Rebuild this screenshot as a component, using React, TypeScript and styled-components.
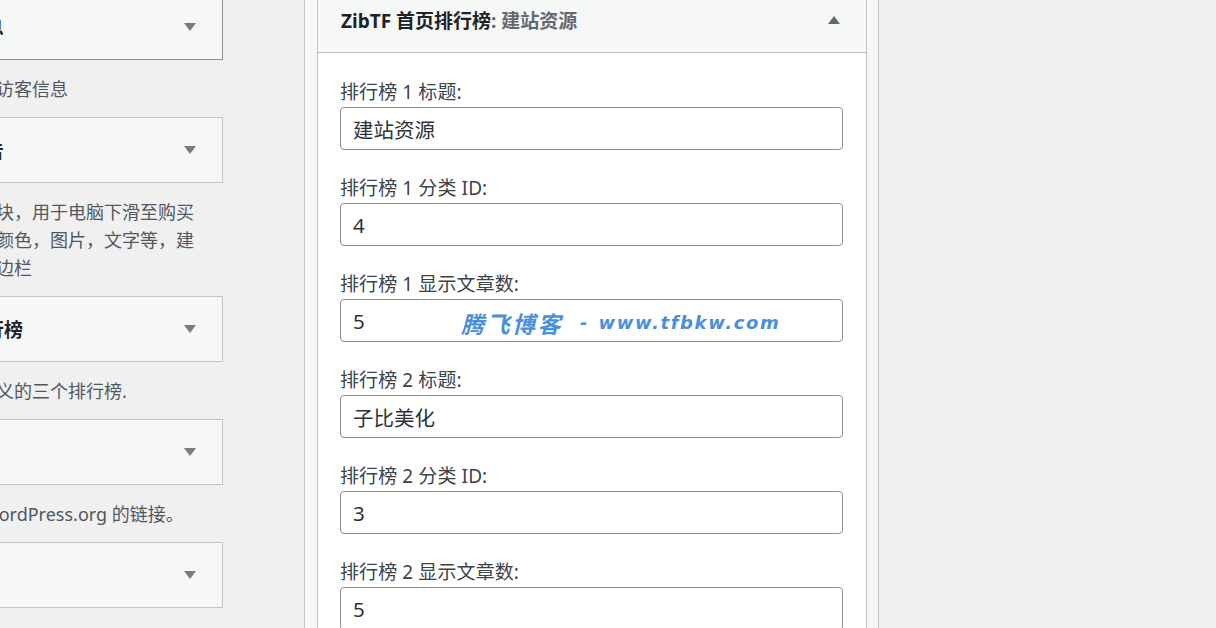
import React from "react";
import styled, { createGlobalStyle } from "styled-components";

const GlobalStyle = createGlobalStyle`
  html, body {
    margin: 0;
    padding: 0;
    background: #f0f0f1;
    overflow: hidden;
  }
  body {
    font-family: "Noto Sans", "Noto Sans CJK SC", sans-serif;
  }
`;

const Page = styled.div`
  position: relative;
  display: flex;
  align-items: flex-start;
  width: 1216px;
  height: 628px;
  overflow: hidden;
  background: #f0f0f1;
`;

const LeftColumn = styled.div`
  flex: none;
  width: 353px;
  margin-left: -130px;
  margin-top: -6px;
`;

const WidgetBox = styled.div<{ $active?: boolean }>`
  display: flex;
  align-items: center;
  justify-content: space-between;
  height: 66px;
  box-sizing: border-box;
  background: #f6f7f7;
  border: 1px solid ${(p) => (p.$active ? "#8c8f94" : "#c3c4c7")};
  padding: 0 26px 0 12px;
`;

const BoxTitle = styled.span`
  font-size: 19px;
  font-weight: 700;
  color: #1d2327;
  white-space: nowrap;
`;

const Description = styled.p`
  margin: 0;
  padding: 15px 0 14px;
  font-size: 18px;
  line-height: 28px;
  color: #50575e;
  white-space: nowrap;
`;

const SidebarColumn = styled.div`
  flex: none;
  width: 575px;
  height: 641px;
  box-sizing: border-box;
  margin-left: 81px;
  margin-top: -13px;
  border-left: 1px solid #c3c4c7;
  border-right: 1px solid #c3c4c7;
  background: #f6f7f7;
  padding: 0 11px 0 12px;
`;

const Widget = styled.div`
  background: #fff;
  border: 1px solid #c3c4c7;
`;

const WidgetHeader = styled.div`
  display: flex;
  align-items: center;
  justify-content: space-between;
  height: 65px;
  box-sizing: border-box;
  background: #f6f7f7;
  border-bottom: 1px solid #c3c4c7;
  padding: 0 26px 0 23px;
`;

const HeaderTitle = styled.h3`
  margin: 0;
  font-size: 19px;
  font-weight: 700;
  color: #1d2327;
  white-space: nowrap;
`;

const InTitle = styled.span`
  color: #646970;
`;

const WidgetBody = styled.div`
  padding: 27px 23px 0 22px;
`;

const Field = styled.div`
  display: flex;
  flex-direction: column;
  margin-bottom: 26px;
`;

const Label = styled.label`
  font-size: 19px;
  line-height: 24px;
  color: #3c434a;
  white-space: nowrap;
  letter-spacing: 0.1px;
`;

const TextInput = styled.input`
  margin-top: 3px;
  height: 43px;
  box-sizing: border-box;
  width: 100%;
  border: 1px solid #8c8f94;
  border-radius: 4px;
  padding: 0 12px;
  font-family: "Noto Sans", "Noto Sans CJK SC", sans-serif;
  font-size: 20.5px;
  color: #2c3338;
  background: #fff;
  outline: none;
`;

const Watermark = styled.div`
  position: absolute;
  left: 461px;
  top: 309px;
  display: flex;
  align-items: center;
  color: #4a8fde;
  font-weight: 700;
  font-style: italic;
  white-space: nowrap;
  pointer-events: none;
`;

const MarkCjk = styled.span`
  font-family: "Noto Sans CJK SC", sans-serif;
  font-size: 23px;
  letter-spacing: 2.5px;
  line-height: 28px;
`;

const MarkDash = styled.span`
  font-family: "DejaVu Sans", sans-serif;
  font-size: 18px;
  line-height: 28px;
  margin: 0 11px 0 17px;
`;

const MarkLatin = styled.span`
  font-family: "DejaVu Sans", sans-serif;
  font-size: 18px;
  letter-spacing: 1.6px;
  line-height: 28px;
`;

const Arrow = ({ up }: { up?: boolean }) => (
  <svg width="12" height="8" viewBox="0 0 12 8" aria-hidden="true">
    <polygon
      points={up ? "6,0 12,8 0,8" : "0,0 12,0 6,8"}
      fill={up ? "#646970" : "#787c82"}
    />
  </svg>
);

const leftWidgets = [
  { title: "Zibll 用户信息", desc: ["显示登录用户或访客信息"], active: true },
  {
    title: "Zibll 侧栏广告",
    desc: [
      "侧边栏的悬浮模块，用于电脑下滑至购买",
      "可以自定义背景颜色，图片，文字等，建",
      "议放在文章页侧边栏",
    ],
  },
  { title: "Zibll 首页排行榜", desc: ["在首页显示自定义的三个排行榜."] },
  { title: "元数据", desc: ["登录、RSS 和 WordPress.org 的链接。"] },
  { title: "搜索", desc: [] as string[] },
];

const fields = [
  { label: "排行榜 1 标题:", value: "建站资源" },
  { label: "排行榜 1 分类 ID:", value: "4" },
  { label: "排行榜 1 显示文章数:", value: "5" },
  { label: "排行榜 2 标题:", value: "子比美化" },
  { label: "排行榜 2 分类 ID:", value: "3" },
  { label: "排行榜 2 显示文章数:", value: "5" },
];

export default function App() {
  return (
    <>
      <GlobalStyle />
      <Page>
        <LeftColumn>
          {leftWidgets.map((w, i) => (
            <React.Fragment key={i}>
              <WidgetBox $active={w.active}>
                <BoxTitle>{w.title}</BoxTitle>
                <Arrow />
              </WidgetBox>
              {w.desc.length > 0 && (
                <Description>
                  {w.desc.map((line, j) => (
                    <React.Fragment key={j}>
                      {j > 0 && <br />}
                      {line}
                    </React.Fragment>
                  ))}
                </Description>
              )}
            </React.Fragment>
          ))}
        </LeftColumn>
        <SidebarColumn>
          <Widget>
            <WidgetHeader>
              <HeaderTitle>
                ZibTF 首页排行榜<InTitle>: 建站资源</InTitle>
              </HeaderTitle>
              <Arrow up />
            </WidgetHeader>
            <WidgetBody>
              {fields.map((f, i) => (
                <Field key={i}>
                  <Label>{f.label}</Label>
                  <TextInput type="text" value={f.value} readOnly />
                </Field>
              ))}
            </WidgetBody>
          </Widget>
        </SidebarColumn>
        <Watermark>
          <MarkCjk>腾飞博客</MarkCjk>
          <MarkDash>-</MarkDash>
          <MarkLatin>www.tfbkw.com</MarkLatin>
        </Watermark>
      </Page>
    </>
  );
}
